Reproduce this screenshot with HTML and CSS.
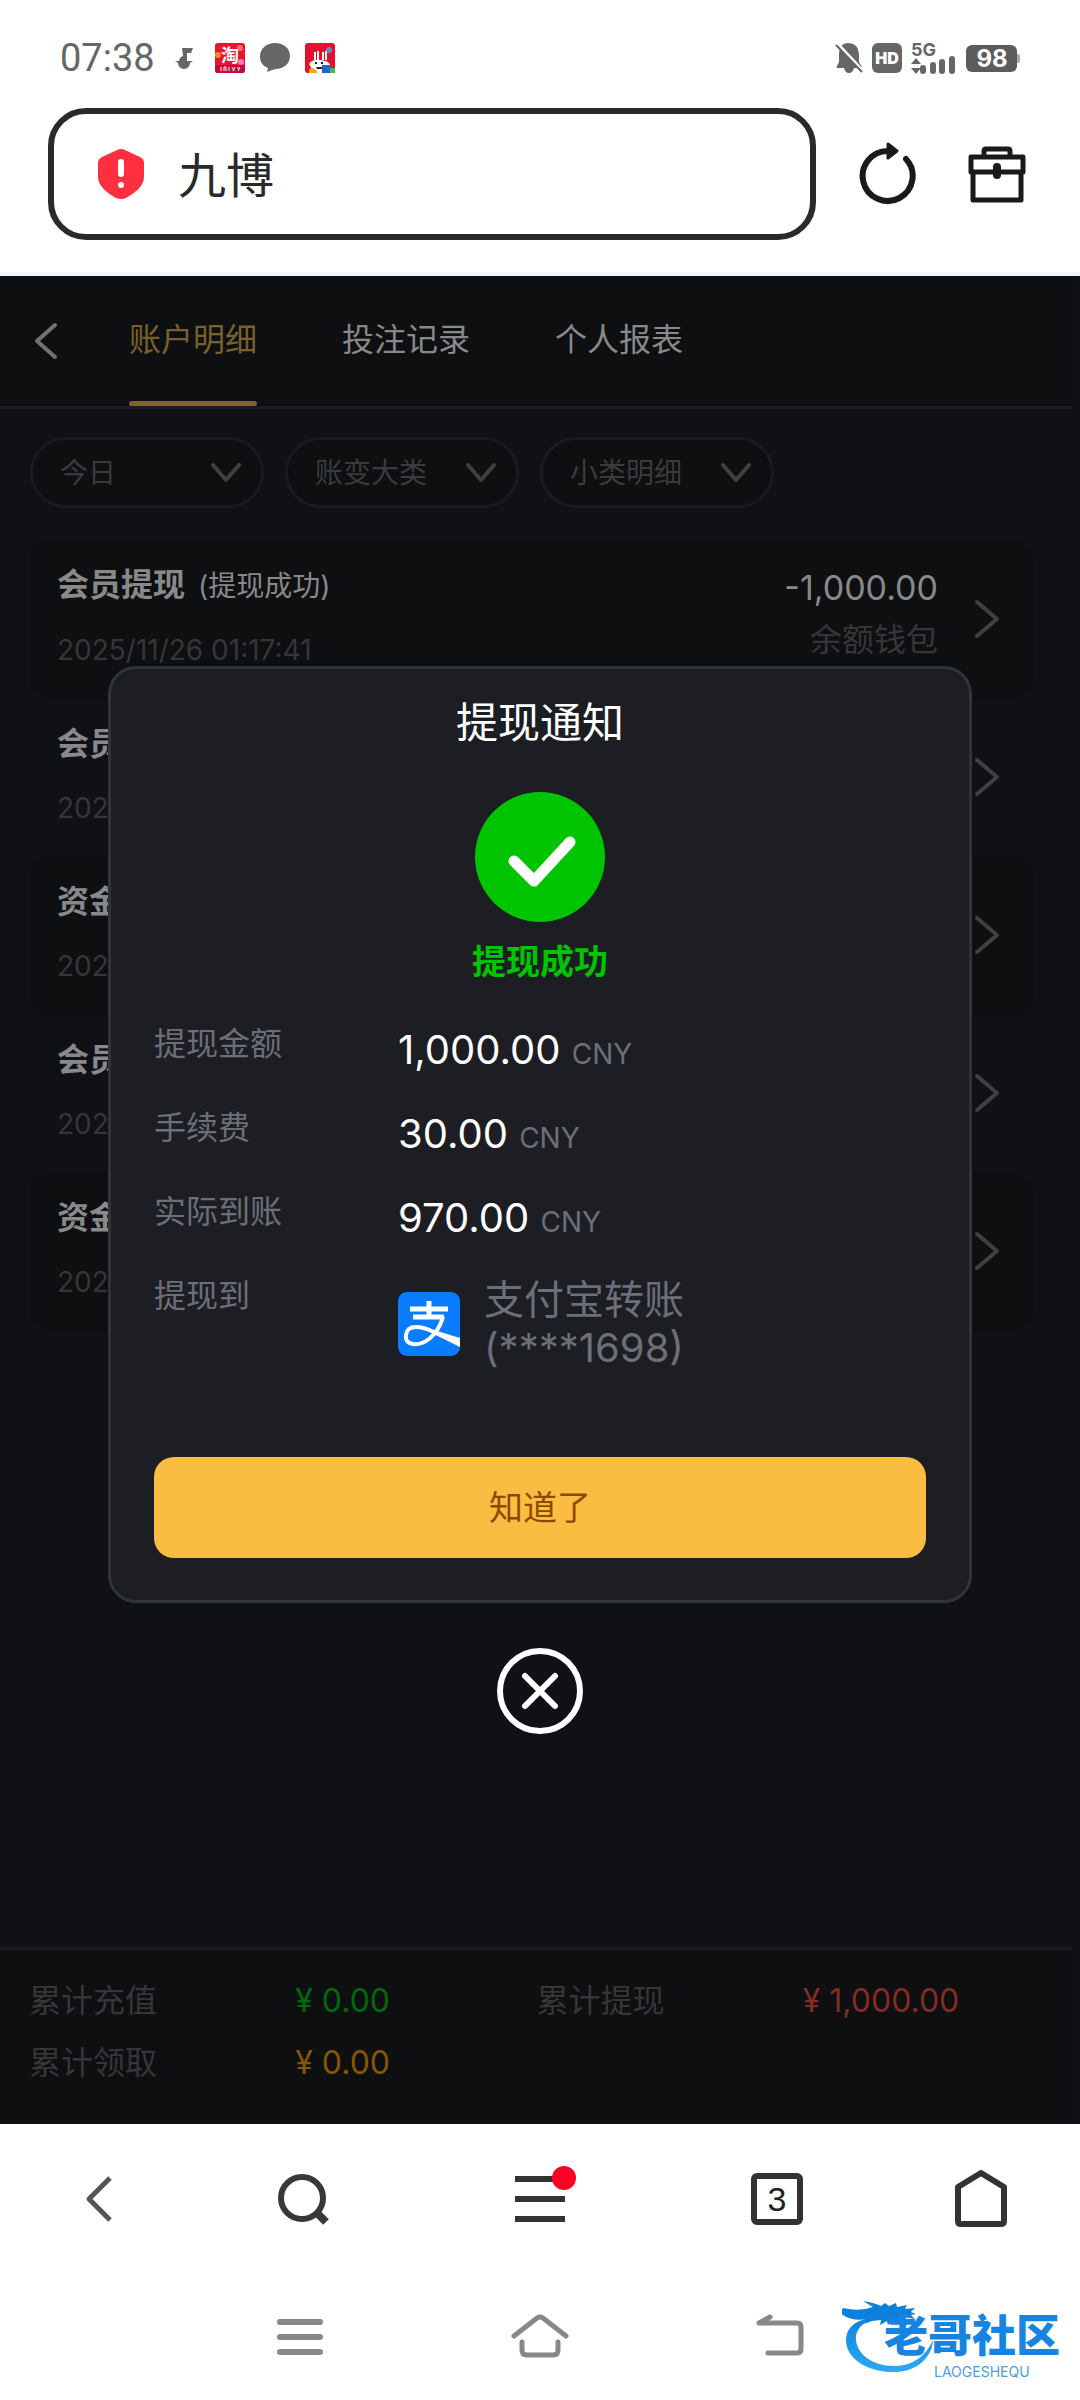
FILE: index.html
```
<!DOCTYPE html>
<html lang="zh-CN">
<head>
	<title>九博</title>
	<meta charset="utf-8">
	<meta name="viewport" content="width=device-width">
	<link rel="stylesheet" href="styles.css">
</head>
<body>
	<div class="status">
		<span class="time">07:38</span>
		<div class="status-left">
			<svg width="20" height="30" viewBox="0 0 20 30"><path d="M7 5h11l-2 5h-4v8h6l-3 2a6 6 0 0 1-12 0l-3-2h4a6 6 0 0 1 4-5z" fill="#666"/></svg>
			<svg width="30" height="30" viewBox="0 0 30 30">
				<rect width="30" height="30" rx="3" fill="#e8152f"/>
				<circle cx="3" cy="12" r="3" fill="#ff8a1f"/><circle cx="26" cy="19" r="3" fill="#ff7fb4"/><circle cx="25" cy="5" r="3" fill="#ff6d74"/>
				<rect y="22" width="30" height="8" rx="3" fill="#c40a3c"/>
				<text class="tao" x="15" y="19" text-anchor="middle">淘</text>
				<path d="M6 28v-4M9 28v-4h2v4M14 24v4M17 24l2 4M20 24l-2 4M22 25h3l-2 3" stroke="#fff" fill="none"/>
			</svg>
			<svg width="30" height="30" viewBox="0 0 30 30"><path d="M15 0c8 0 15 5 15 13S23 26 16 26q-5 1-9 3l1-4C3 23 0 19 0 14 0 5 7 0 15 0z" fill="#666"/></svg>
			<svg width="30" height="30" viewBox="0 0 30 30">
				<rect width="30" height="30" rx="3" fill="#e60f2d"/>
				<path d="M10 9v8M13 8v9M18 9v8M21 8v9" stroke="#fff" stroke-width="2"/>
				<path d="M4 21q3-5 12-4 8 1 9 5l-5 8H9z" fill="#fff"/>
				<path d="M10 19h2v2h-2zM16 19h2v2h-2zM11 24h7v2h-6z" fill="#222"/>
				<circle cx="24" cy="7" r="3" fill="#7385b8"/>
				<path d="M4 26l4-1 4 3v2H4z" fill="#ffa51f"/><path d="M17 22h8v8h-8z" fill="#2467c9"/><path d="M25 25h5v5h-5z" fill="#48b860"/>
			</svg>
		</div>
		<div class="status-right">
			<svg width="28" height="32" viewBox="0 0 28 32">
				<path d="M4 12q0-11 9-11 10 0 11 11v8l3 5q0 1-2 1h-6q-1 5-5 5t-5-5H2q-1-1 0-2l2-4z" fill="#666"/>
				<path d="M3 2l26 28" stroke="#fff" stroke-width="3"/><path d="M1 3l26 27" stroke="#666" stroke-width="2"/>
			</svg>
			<svg width="30" height="30" viewBox="0 0 30 30"><rect width="30" height="30" rx="6" fill="#666"/><text class="hd" x="15" y="21" text-anchor="middle">HD</text></svg>
			<svg width="46" height="40" viewBox="0 -4 46 40">
				<text class="net" x="0" y="14">5G</text>
				<path d="M0 22l5-6 5 6zM0 26h10l-5 6z" fill="#666"/>
				<path d="M12 26v3M22 23v6M31 20v9M41 17v12" stroke="#666" stroke-width="6" stroke-linecap="round"/>
			</svg>
			<svg width="54" height="27" viewBox="0 0 54 27"><path d="M50 9h2q2 0 2 2v5q0 2-2 2h-2z" fill="#aaa"/><rect width="51" height="27" rx="6" fill="#5c5c5c"/><text class="battery" x="26" y="22" text-anchor="middle">98</text></svg>
		</div>
	</div>

	<div class="address">
		<div class="url">
			<svg width="48" height="52" viewBox="0 0 48 52"><path d="M24 1q2 0 4 1l15 7q4 2 4 6v14q0 11-18 21-5 2-10 0Q1 40 1 29V15q0-4 4-6l15-7q2-1 4-1z" fill="#ff2f40"/><path d="M24 14v12" stroke="#fff" stroke-width="6" stroke-linecap="round"/><circle cx="24" cy="37" r="3" fill="#fff"/></svg>
			<input type="text" aria-label="网址" value="九博">
		</div>
		<button class="icon-btn" aria-label="刷新">
			<svg width="58" height="64" viewBox="0 0 58 64"><path d="M47 17A25 25 0 1 1 29 9" fill="none" stroke="#1a1a1a" stroke-width="6" stroke-linecap="round"/><path d="M29 2l9 7-9 7z" fill="#1a1a1a" stroke="#1a1a1a" stroke-width="3" stroke-linejoin="round"/></svg>
		</button>
		<button class="icon-btn" aria-label="工具箱">
			<svg width="58" height="58" viewBox="0 0 58 58" fill="none" stroke="#1a1a1a" stroke-width="5" stroke-linejoin="round"><path d="M16 11V6q0-2 2-2h22q2 0 2 2v5M3 12h52v15H3zM5 27v28h48V27"/><path d="M29 22v8" stroke-width="8" stroke-linecap="round"/></svg>
		</button>
	</div>

	<main class="page">
		<nav class="tabs">
			<a class="back" href="#" aria-label="返回"><svg width="24" height="38" viewBox="0 0 24 38"><path d="M21 3L3 19l18 16" fill="none" stroke="#6f7173" stroke-width="4" stroke-linecap="round" stroke-linejoin="round"/></svg></a>
			<a class="tab active" href="#">账户明细</a>
			<a class="tab" href="#">投注记录</a>
			<a class="tab" href="#">个人报表</a>
		</nav>

		<div class="filters">
			<label class="filter">
				<select aria-label="日期"><option>今日</option></select>
				<svg width="30" height="20" viewBox="0 0 30 20"><path d="M2 2l13 15L28 2"/></svg>
			</label>
			<label class="filter">
				<select aria-label="大类"><option>账变大类</option></select>
				<svg width="30" height="20" viewBox="0 0 30 20"><path d="M2 2l13 15L28 2"/></svg>
			</label>
			<label class="filter">
				<select aria-label="小类"><option>小类明细</option></select>
				<svg width="30" height="20" viewBox="0 0 30 20"><path d="M2 2l13 15L28 2"/></svg>
			</label>
		</div>

		<ul class="list">
			<li>
				<div class="info">
					<p class="name"><b>会员提现</b> <span>(提现成功)</span></p>
					<p class="date">2025/11/26 01:17:41</p>
				</div>
				<div class="sum">
					<p class="amount">-1,000.00</p>
					<p class="wallet">余额钱包</p>
				</div>
				<svg class="more" width="26" height="40" viewBox="0 0 26 40"><path d="M3 3l20 17L3 37"/></svg>
			</li>
			<li>
				<div class="info"><p class="name"><b>会员</b></p><p class="date">2025</p></div>
				<svg class="more" width="26" height="40" viewBox="0 0 26 40"><path d="M3 3l20 17L3 37"/></svg>
			</li>
			<li>
				<div class="info"><p class="name"><b>资金</b></p><p class="date">2025</p></div>
				<svg class="more" width="26" height="40" viewBox="0 0 26 40"><path d="M3 3l20 17L3 37"/></svg>
			</li>
			<li>
				<div class="info"><p class="name"><b>会员</b></p><p class="date">2025</p></div>
				<svg class="more" width="26" height="40" viewBox="0 0 26 40"><path d="M3 3l20 17L3 37"/></svg>
			</li>
			<li>
				<div class="info"><p class="name"><b>资金</b></p><p class="date">2025</p></div>
				<svg class="more" width="26" height="40" viewBox="0 0 26 40"><path d="M3 3l20 17L3 37"/></svg>
			</li>
		</ul>

		<dl class="total">
			<dt>累计充值</dt><dd class="green">¥ 0.00</dd>
			<dt>累计提现</dt><dd class="red">¥ 1,000.00</dd>
			<dt>累计领取</dt><dd class="orange">¥ 0.00</dd>
		</dl>

		<!-- withdraw popup -->
		<div class="layer">
			<section class="modal" role="dialog" aria-labelledby="modal-title">
				<h2 id="modal-title">提现通知</h2>
				<svg class="ok" width="130" height="130" viewBox="0 0 130 130"><circle cx="65" cy="65" r="65" fill="#00c400"/><path d="M39 69l20 20 36-39" fill="none" stroke="#fff" stroke-width="11" stroke-linecap="round" stroke-linejoin="round"/></svg>
				<p class="result">提现成功</p>
				<dl class="detail">
					<dt>提现金额</dt><dd>1,000.00 <small>CNY</small></dd>
					<dt>手续费</dt><dd>30.00 <small>CNY</small></dd>
					<dt>实际到账</dt><dd>970.00 <small>CNY</small></dd>
					<dt>提现到</dt>
					<dd class="target">
						<svg width="62" height="64" viewBox="0 0 62 64">
							<rect width="62" height="64" rx="9" fill="#0a7cff"/>
							<path d="M12 17h38M15 25h31M31 9v16" fill="none" stroke="#fff" stroke-width="5"/>
							<path d="M45 25q-4 14-14 22-8 6-16 5-8-1-7-9 1-8 10-8 8 0 18 5l26 12" fill="none" stroke="#fff" stroke-width="4"/>
							<path d="M36 38l26 8v9L34 41z" fill="#fff"/>
						</svg>
						<span>支付宝转账<br>(****1698)</span>
					</dd>
				</dl>
				<button class="confirm">知道了</button>
			</section>
			<button class="close" aria-label="关闭">
				<svg width="86" height="86" viewBox="0 0 86 86" fill="none" stroke="#fff" stroke-width="6"><circle cx="43" cy="43" r="40"/><path d="M28 28l30 30M58 28L28 58" stroke-linecap="round"/></svg>
			</button>
		</div>
	</main>

	<nav class="browser">
		<button aria-label="后退"><svg width="28" height="48" viewBox="0 0 28 48"><path d="M25 3L4 24l21 21" fill="none" stroke="#555" stroke-width="5" stroke-linejoin="round"/></svg></button>
		<button aria-label="搜索"><svg width="52" height="52" viewBox="0 0 52 52" fill="none" stroke="#383838" stroke-width="6"><circle cx="25" cy="25" r="21"/><path d="M40 40l9 9" stroke-width="8"/></svg></button>
		<button class="menu" aria-label="菜单"><svg width="50" height="46" viewBox="0 0 50 46"><path d="M0 3h50M0 23h50M0 43h50" stroke="#333" stroke-width="6"/></svg><span class="dot"></span></button>
		<button aria-label="窗口"><span class="windows">3</span></button>
		<button aria-label="主页"><svg width="52" height="58" viewBox="0 0 52 58"><path d="M26 3L3 17v34q0 3 3 3h40q3 0 3-3V17z" fill="none" stroke="#333" stroke-width="6" stroke-linejoin="round"/></svg></button>
	</nav>

	<footer class="system">
		<button aria-label="最近任务"><svg width="46" height="38" viewBox="0 0 46 38"><path d="M3 4h40M3 19h40M3 34h40" stroke="#888" stroke-width="6" stroke-linecap="round"/></svg></button>
		<button aria-label="桌面"><svg width="58" height="46" viewBox="0 0 58 46"><path d="M3 22L26 4q3-2 6 0l23 18M11 28v8q0 5 5 5h26q5 0 5-5v-8" fill="none" stroke="#888" stroke-width="5" stroke-linecap="round"/></svg></button>
		<button aria-label="返回键"><svg width="50" height="46" viewBox="0 0 50 46"><path d="M15 3L4 9h38q4 0 4 4v22q0 4-4 4H13" fill="none" stroke="#888" stroke-width="5" stroke-linecap="round" stroke-linejoin="round"/></svg></button>
		<svg class="mark" width="224" height="84" viewBox="0 0 224 84">
			<defs><linearGradient id="sea" x1="0" y1="0" x2="0" y2="1"><stop offset="0" stop-color="#0b83e0"/><stop offset="1" stop-color="#2fa8f5"/></linearGradient></defs>
			<path d="M40 18Q4 21 4 42c0 20 24 33 50 32 22-1 36-15 37-32-7 16-20 26-39 26-23 0-37-13-38-26-1-12 9-20 26-24z" fill="url(#sea)"/>
			<path d="M1 10q16 4 30-1l-10-6q12 2 18 5l4-3 4 3 7-3 1 4 10-2-2 4 10-1-4 4 5 2-5 1 4 4-11-2-2 5-8-2-6 5-1-4-7 4 1-5-9 1-8 3 4-5q-17 3-28-6z" fill="#0d80dd"/>
			<text class="mark-cn" x="42" y="54">老哥社区</text>
			<text class="mark-en" x="92" y="79">LAOGESHEQU</text>
		</svg>
	</footer>
</body>
</html>
```
FILE: styles.css
```
*{
	box-sizing: border-box;
}
body{
	display: flex;
	flex-direction: column;
	min-height: 100vh;
	margin: 0;
	background: #fff;
	color: #2a2a2a;
	font: 32px/42px Inter, "Noto Sans CJK SC", sans-serif;
}
p, h2, ul, dl, dd{
	margin: 0;
	padding: 0;
}
a{
	color: inherit;
	text-decoration: none;
}
svg{
	display: block;
	flex: none;
}
button{
	padding: 0;
	border: 0;
	background: none;
	font: inherit;
}
input, select{
	min-width: 0;
	padding: 0;
	border: 0;
	outline: 0;
	background: none;
	color: inherit;
	font: inherit;
}

/* status bar */
.status{
	display: flex;
	align-items: center;
	height: 108px;
	padding: 8px 60px 0;
}
.time{
	color: #666;
	font: 38px/42px Roboto, sans-serif;
}
.status-left{
	display: flex;
	align-items: center;
	gap: 15px;
	margin-left: 20px;
}
.status-left svg:first-child{
	margin-right: 5px;
}
.status-right{
	display: flex;
	align-items: center;
	gap: 9px;
	margin-left: auto;
}
.tao{
	fill: #fff;
	font-size: 18px;
	font-weight: bold;
}
.hd{
	fill: #fff;
	font-size: 16px;
	font-weight: 900;
}
.net{
	fill: #666;
	font-size: 18px;
	font-weight: bold;
}
.battery{
	fill: #fff;
	font-size: 24px;
	font-weight: bold;
}

/* address bar */
.address{
	display: flex;
	align-items: center;
	padding: 0 54px 32px 48px;
	border-bottom: 4px solid #f3f6f8;
}
.url{
	display: flex;
	flex: 1;
	align-items: center;
	gap: 33px;
	min-width: 0;
	height: 132px;
	padding: 0 43px;
	border: 6px solid #2a2a2a;
	border-radius: 38px;
}
.url input{
	flex: 1;
	padding-bottom: 4px;
	font-size: 48px;
}
.icon-btn{
	margin-left: 43px;
}
.icon-btn + .icon-btn{
	margin-left: 51px;
}

/* page */
.page{
	position: relative;
	display: flex;
	flex: 1;
	flex-direction: column;
	background: #101116;
	color: #88898a;
}
.tabs{
	display: flex;
	align-items: flex-start;
	gap: 85px;
	margin-right: 8px;
	padding-left: 34px;
	border-bottom: 3px solid #1a1b24;
	background: #0e0f10;
}
.back{
	margin: 46px -14px 0 0;
}
.tab{
	position: relative;
	height: 130px;
	line-height: 128px;
}
.active{
	color: #7a602b;
}
.active::after{
	content: "";
	position: absolute;
	right: 0;
	bottom: 0;
	left: 0;
	height: 5px;
	border-radius: 3px;
	background: #7f642c;
}
.filters{
	display: flex;
	gap: 21px;
	padding: 28px 30px 32px;
}
.filter{
	display: flex;
	align-items: center;
	width: 234px;
	height: 71px;
	padding: 0 20px 0 27px;
	border: 3px solid #191a20;
	border-radius: 36px;
	background: #0e0f10;
	color: #393b3e;
	font-size: 28px;
}
.filter select{
	flex: 1;
	appearance: none;
}
.filter path, .more path{
	fill: none;
	stroke: #3f4042;
	stroke-width: 4px;
	stroke-linecap: round;
	stroke-linejoin: round;
}
.list{
	margin: 0 47px 0 30px;
	list-style: none;
}
.list li{
	display: flex;
	align-items: center;
	padding: 24px 33px 26px 27px;
	border-radius: 20px;
}
.list li:nth-child(odd){
	background: #0e0f10;
}
.info{
	flex: 1;
	padding-bottom: 2px;
}
.name{
	margin-bottom: 22px;
}
.name span{
	margin-left: 4px;
	font-size: 28px;
}
.date{
	color: #353638;
	font-size: 28px;
}
.sum{
	align-self: flex-start;
	margin: 0 36px -4px 0;
	text-align: right;
}
.amount{
	font-size: 34px;
	line-height: 48px;
}
.wallet{
	color: #353638;
	line-height: 56px;
}
.total{
	display: grid;
	grid-template-columns: 266fr 241fr 266fr 269fr;
	margin: auto 8px 0 0;
	padding: 20px 0 30px 29px;
	border-top: 3px solid #191b1f;
	background: #0e0f10;
	color: #353638;
	line-height: 62px;
}
.green{
	color: #006a08;
}
.red{
	color: #852a25;
}
.orange{
	color: #865600;
}

/* popup */
.layer{
	position: absolute;
	inset: 0;
	display: flex;
	flex-direction: column;
	align-items: center;
	justify-content: center;
}
.modal{
	width: 80%;
	padding: 30px 43px 42px;
	border: 3px solid #30353d;
	border-radius: 28px;
	background: #1d1e24;
}
.modal h2{
	color: #fff;
	font-size: 42px;
	font-weight: normal;
	line-height: 48px;
	text-align: center;
}
.ok{
	margin: 45px auto 20px;
}
.result{
	color: #00c400;
	font-size: 34px;
	font-weight: bold;
	line-height: 40px;
	text-align: center;
}
.detail{
	display: grid;
	grid-template-columns: 244px 1fr;
	row-gap: 32px;
	margin-top: 42px;
	color: #6b6f78;
	line-height: 40px;
}
.detail dd{
	color: #fff;
	font-size: 40px;
	line-height: 52px;
}
.detail small{
	color: #6b6f78;
	font-size: 28px;
	line-height: 28px;
}
.detail .target{
	display: flex;
	align-items: center;
	gap: 24px;
	color: #6b6f78;
	line-height: 48px;
}
.confirm{
	width: 100%;
	height: 101px;
	margin-top: 85px;
	border-radius: 20px;
	background: #fabd41;
	color: #904800;
	font-size: 34px;
}
.close{
	margin-top: 45px;
}

/* bottom bars */
.browser{
	display: grid;
	grid-template-columns: 198fr 210fr 264fr 210fr 198fr;
	height: 149px;
}
.browser button, .system button{
	display: flex;
	align-items: center;
	justify-content: center;
}
.menu{
	position: relative;
}
.dot{
	position: absolute;
	top: 42px;
	left: calc(50% + 12px);
	width: 24px;
	height: 24px;
	border-radius: 50%;
	background: #ff0024;
}
.windows{
	width: 52px;
	height: 52px;
	border: 6px solid #333;
	border-radius: 6px;
	color: #222;
	font-family: "Liberation Sans", sans-serif;
	font-size: 34px;
	line-height: 40px;
}
.system{
	position: relative;
	display: grid;
	grid-template-columns: repeat(3, 1fr);
	height: 127px;
	padding: 0 180px;
}
.mark{
	position: absolute;
	right: 14px;
	bottom: 18px;
}
.mark-cn{
	fill: #1684e0;
	font-size: 44px;
	font-weight: 900;
}
.mark-en{
	fill: #4a9ee0;
	font-size: 14px;
}
```
